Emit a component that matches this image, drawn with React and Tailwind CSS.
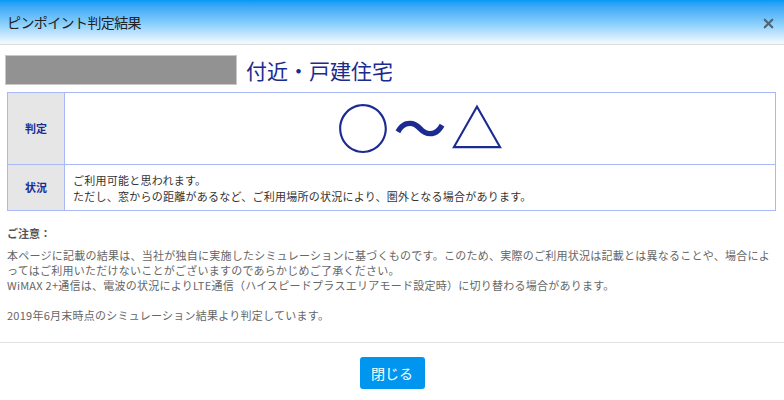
import React from 'react';
import { X } from 'lucide-react';

const jp = { fontFamily: '"Noto Sans CJK JP", "Noto Sans", sans-serif' };

function App() {
  return (
    <div className="w-[784px] h-[400px] bg-white flex flex-col text-[#333]" style={jp}>
      {/* header */}
      <div className="h-[45px] flex items-center justify-between pl-[7px] pr-[8px] border-b border-[#dcdcdc] bg-gradient-to-b from-[#0099f5] via-[#7fcbfb] to-[#f4faff]">
        <p className="text-[14px] text-[#222] tracking-[-0.6px]">ピンポイント判定結果</p>
        <button className="text-[#4d6478] mt-[2px]">
          <X size={15} strokeWidth={3.5} />
        </button>
      </div>

      <div className="flex flex-col px-[7px] pt-[10px]">
        <div className="flex items-center gap-[9px] -ml-[2px]">
          <div className="w-[232px] h-[30px] bg-[#929292] border border-[#c8c8c8]"></div>
          <p className="text-[21px] text-[#1c2b90] leading-[30px]">付近・戸建住宅</p>
        </div>

        <table className="mt-[7px] w-[769px] border-collapse">
          <tbody>
            <tr className="h-[72px]">
              <td className="w-[57px] border border-[#a9b9f7] bg-[#e6e6e6] text-center text-[11px] font-bold text-[#1c2b90]">判定</td>
              <td className="border border-[#a9b9f7] text-center pb-[4px] pl-[4px] text-[53px] font-medium tracking-[4px] leading-none text-[#1c2b90]">○〜△</td>
            </tr>
            <tr className="h-[46px]">
              <td className="border border-[#a9b9f7] bg-[#e6e6e6] text-center text-[11px] font-bold text-[#1c2b90]">状況</td>
              <td className="border border-[#a9b9f7] pl-[8px] text-[11px] tracking-[0.25px] leading-[16px] text-[#333]">
                ご利用可能と思われます。<br />
                ただし、窓からの距離があるなど、ご利用場所の状況により、圏外となる場合があります。
              </td>
            </tr>
          </tbody>
        </table>

        <p className="mt-[14px] text-[11px] font-bold text-[#555]">ご注意：</p>
        <p className="mt-[6px] text-[11px] tracking-[0.25px] leading-[15px] text-[#666]">
          本ページに記載の結果は、当社が独自に実施したシミュレーションに基づくものです。このため、実際のご利用状況は記載とは異なることや、場合によってはご利用いただけないことがございますのであらかじめご了承ください。<br />
          WiMAX 2+通信は、電波の状況によりLTE通信（ハイスピードプラスエリアモード設定時）に切り替わる場合があります。<br />
          <br />
          2019年6月末時点のシミュレーション結果より判定しています。
        </p>
      </div>

      <div className="mt-auto mb-[11px] border-t border-[#e0e0e0] pt-[14px] flex justify-center">
        <button className="w-[65px] h-[32px] rounded-[3px] bg-[#0096f0] text-white text-[14px]">閉じる</button>
      </div>
    </div>
  );
}

export default App;
